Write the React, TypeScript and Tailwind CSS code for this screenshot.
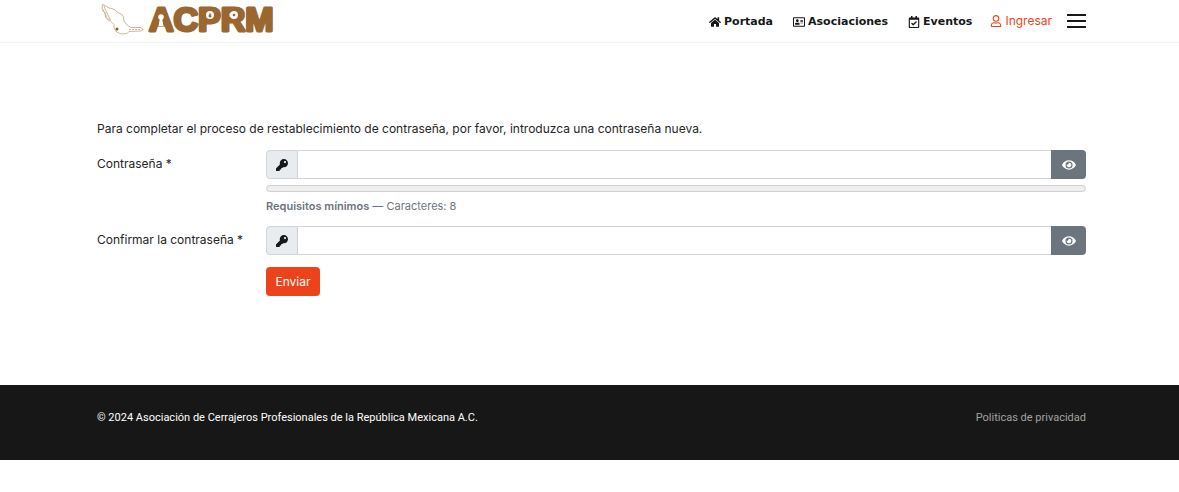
import { useState } from "react";
import {
  FaEye,
  FaHome,
  FaKey,
  FaRegAddressCard,
  FaRegCalendarCheck,
  FaRegUser,
} from "react-icons/fa";

function Logo() {
  return (
    <svg
      viewBox="0 0 180 40"
      className="block h-10 w-[180px]"
      role="img"
      aria-label="ACPRM"
    >
      <g fill="none" stroke="#c2a67e" strokeWidth="0.8" strokeLinejoin="round">
        <path d="M5.5 4.5 L8 5.5 L12 8 L15 8.5 L18 10 L20.5 12.5 L24.5 14 L26.500 17 L27 21 L30 25 L34 27.500 L44 27.500 L46 29.500 L44 31 L32 31.500 L30 33.500 L24 34 L19 31.500 L17 28 L17 24.500 L13 20.500 L10 17.500 L7.500 12 L5 8.500 Z" />
        <path d="M7 6 L8.500 10 L11 15 L13.500 20 L11.500 20.500 L8.500 17 L8 13 L5 10" />
        <path d="M32 29.500 H44" strokeDasharray="2 1" />
      </g>
      <circle cx="20" cy="29" r="1.500" fill="#8d5a22" />
      <text
        x="52"
        y="31"
        fontFamily="Liberation Sans"
        fontWeight="700"
        fontSize="34"
        fill="#99672f"
        stroke="#99672f"
        strokeWidth="3"
        strokeLinejoin="round"
      >
        ACPRM
      </text>
      <g fill="#ffffff">
        <circle cx="64" cy="17" r="2.800" />
        <path d="M63 18 H65 L66.500 26 H61.500 Z" />
        <circle cx="113" cy="15" r="4" />
        <circle cx="137" cy="15" r="4" />
      </g>
      <g fill="#99672f">
        <path d="M113 12.500 L114.500 16 A1.500 1.500 0 1 1 111.500 16 Z" />
        <circle cx="137" cy="15" r="1.300" />
      </g>
    </svg>
  );
}

const links = [
  { label: "Portada", Icon: FaHome },
  { label: "Asociaciones", Icon: FaRegAddressCard },
  { label: "Eventos", Icon: FaRegCalendarCheck },
];

function PasswordField({ id, label }: { id: string; label: string }) {
  const [visible, setVisible] = useState(false);
  return (
    <div className="flex h-[29px] w-full">
      <span className="flex w-8 shrink-0 items-center justify-center rounded-l border border-[#ced4da] bg-[#e9ecef] text-xs text-[#171717]">
        <FaKey />
      </span>
      <input
        id={id}
        type={visible ? "text" : "password"}
        required
        className="min-w-0 flex-1 border-y border-[#ced4da] bg-white px-2 text-xs outline-none"
      />
      <button
        type="button"
        aria-label={`Mostrar: ${label}`}
        onClick={() => setVisible(!visible)}
        className="flex w-[35px] shrink-0 items-center justify-center rounded-r bg-[#6c757d] text-sm text-white"
      >
        <FaEye />
      </button>
    </div>
  );
}

export default function App() {
  return (
    <div className="bg-white font-['Inter',sans-serif] text-xs leading-5 text-[#252525]">
      <header className="flex h-[43px] items-center justify-between border-b border-[#f3f3f3] pr-[93px] pl-[97px]">
        <a href="#" className="self-start">
          <Logo />
        </a>
        <div className="flex items-center">
          <nav className="flex gap-5 pt-0.5 font-['DejaVu_Sans',sans-serif] text-[11px] font-bold text-[#171717]">
            {links.map(({ label, Icon }) => (
              <a key={label} href="#" className="flex items-center gap-[3px]">
                <Icon className="h-3 w-auto" />
                {label}
              </a>
            ))}
          </nav>
          <a
            href="#"
            className="ml-[18px] flex items-center gap-[3px] text-[#ec431c]"
          >
            <FaRegUser />
            Ingresar
          </a>
          <button
            type="button"
            aria-label="Menú"
            className="ml-[15px] flex w-[19px] flex-col gap-1"
          >
            <span className="h-0.5 w-full bg-[#171717]" />
            <span className="h-0.5 w-full bg-[#171717]" />
            <span className="h-0.5 w-full bg-[#171717]" />
          </button>
        </div>
      </header>

      <main className="pt-[76px] pr-[93px] pb-[89px] pl-[97px]">
        <form onSubmit={(e) => e.preventDefault()}>
          <p className="mb-[11px]">
            Para completar el proceso de restablecimiento de contraseña, por
            favor, introduzca una contraseña nueva.
          </p>
          <div className="grid grid-cols-[169px_1fr]">
            <label htmlFor="password" className="pt-1">
              Contraseña *
            </label>
            <div className="mb-2.5">
              <PasswordField id="password" label="Contraseña" />
              <div className="mt-1.5 h-[7px] rounded-full border border-[#cfcfcf] bg-[#efefef]" />
              <p className="mt-1 text-[11px] text-[#6c757d]">
                <b className="font-semibold">Requisitos mínimos</b> —
                Caracteres: 8
              </p>
            </div>
            <label htmlFor="confirm" className="pt-1">
              Confirmar la contraseña *
            </label>
            <PasswordField id="confirm" label="Confirmar la contraseña" />
            <button
              type="submit"
              className="col-start-2 mt-3 h-[29px] w-[54px] rounded bg-[#ec431c] text-white"
            >
              Enviar
            </button>
          </div>
        </form>
      </main>

      <footer className="flex h-[75px] items-start justify-between bg-[#171717] pt-[23px] pr-[93px] pl-[97px] font-['Roboto',sans-serif] text-[11px] text-white">
        <span>
          © 2024 Asociación de Cerrajeros Profesionales de la República Mexicana
          A.C.
        </span>
        <a href="#" className="text-[#a2a2a2]">
          Politicas de privacidad
        </a>
      </footer>
    </div>
  );
}
